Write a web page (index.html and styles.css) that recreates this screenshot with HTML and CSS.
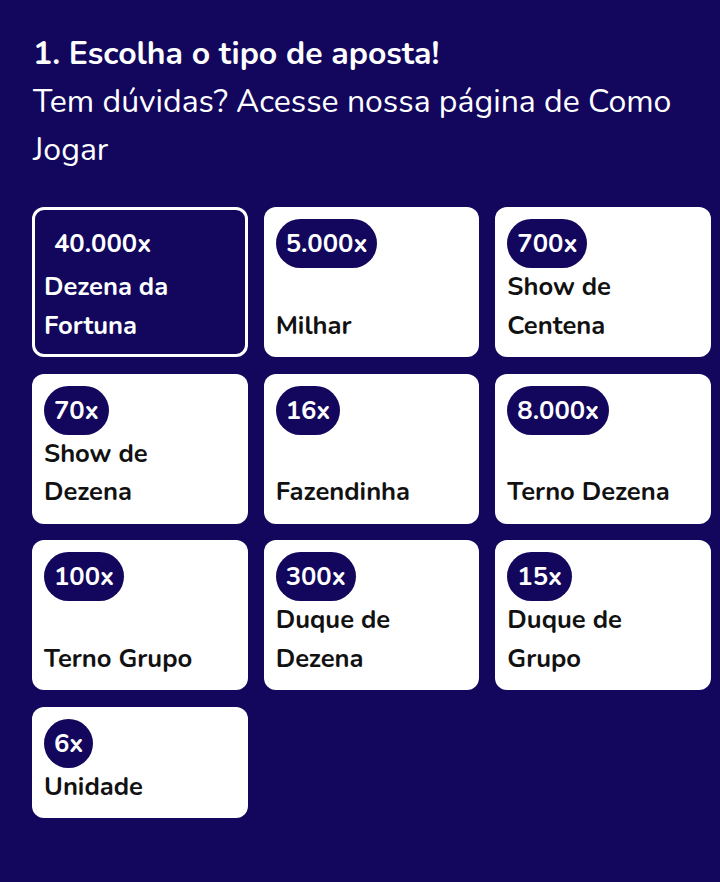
FILE: index.html
```html
<!DOCTYPE html>
<html lang="pt-BR">
<head>
<meta charset="utf-8">
<title>Escolha o tipo de aposta</title>
<link rel="stylesheet" href="styles.css">
</head>
<body>
<main class="page">
  <header class="intro">
    <h1 class="title">1. Escolha o tipo de aposta!</h1>
    <p class="subtitle">Tem dúvidas? Acesse nossa página de Como Jogar</p>
  </header>
  <section class="grid">
    <button class="card card--active"><span class="badge">40.000x</span><span class="label">Dezena da Fortuna</span></button>
    <button class="card"><span class="badge">5.000x</span><span class="label">Milhar</span></button>
    <button class="card"><span class="badge">700x</span><span class="label">Show de Centena</span></button>
    <button class="card"><span class="badge">70x</span><span class="label">Show de Dezena</span></button>
    <button class="card"><span class="badge">16x</span><span class="label">Fazendinha</span></button>
    <button class="card"><span class="badge">8.000x</span><span class="label">Terno Dezena</span></button>
    <button class="card"><span class="badge">100x</span><span class="label">Terno Grupo</span></button>
    <button class="card"><span class="badge">300x</span><span class="label">Duque de Dezena</span></button>
    <button class="card"><span class="badge">15x</span><span class="label">Duque de Grupo</span></button>
    <button class="card"><span class="badge">6x</span><span class="label">Unidade</span></button>
  </section>
</main>
</body>
</html>
```
FILE: styles.css
```css
html, body {
  margin: 0;
  padding: 0;
  background: #12075c;
}
body {
  font-family: "Nunito", "Lato", "Noto Sans", sans-serif;
  color: #fff;
}
.page {
  padding: 29.5px 9px 40px 32px;
}
.intro {
  padding-left: 1px;
}
.title {
  margin: 0;
  font-size: 32px;
  font-weight: 700;
  line-height: 48px;
}
.subtitle {
  margin: 0;
  font-size: 32px;
  font-weight: 400;
  line-height: 48px;
}
.grid {
  margin-top: 33.5px;
  display: grid;
  grid-template-columns: repeat(3, 1fr);
  gap: 16.5px 16px;
  align-items: stretch;
}
.card {
  display: flex;
  flex-direction: column;
  justify-content: space-between;
  align-items: flex-start;
  box-sizing: border-box;
  padding: 12px;
  margin: 0;
  background: #fff;
  border: none;
  border-radius: 12px;
  font-family: inherit;
  text-align: left;
  cursor: pointer;
}
.card--active {
  background: #12075c;
  border: 3px solid #fff;
  padding: 9px;
}
.badge {
  display: inline-flex;
  align-items: center;
  height: 49px;
  box-sizing: border-box;
  padding: 0 10px;
  border-radius: 25px;
  background: #12075c;
  color: #fff;
  font-size: 25.6px;
  font-weight: 700;
}
.label {
  display: block;
  color: #111;
  font-size: 25.6px;
  font-weight: 700;
  line-height: 38.5px;
}
.card--active .label {
  color: #fff;
}
```
